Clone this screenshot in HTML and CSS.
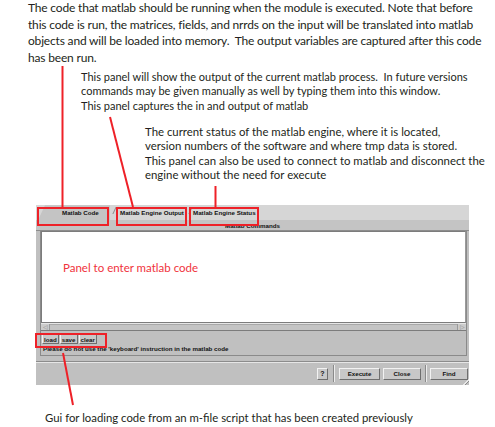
FILE: index.html
```html
<!DOCTYPE html>
<html>
<head>
<meta charset="utf-8">
<link rel="stylesheet" href="styles.css">
</head>
<body>
<div class="page">
  <p class="note note1">The code that matlab should be running when the module is executed. Note that before<br>this code is run, the matrices, fields, and nrrds on the input will be translated into matlab<br>objects and will be loaded into memory.&nbsp; The output variables are captured after this code<br>has been run.</p>
  <p class="note note2">This panel will show the output of the current matlab process.&nbsp; In future versions<br>commands may be given manually as well by typing them into this window.<br>This panel captures the in and output of matlab</p>
  <p class="note note3">The current status of the matlab engine, where it is located,<br>version numbers of the software and where tmp data is stored.<br>This panel can also be used to connect to matlab and disconnect the<br>engine without the need for execute</p>

  <div class="window">
    <div class="tabs">
      <div class="tab tab-code active">Matlab Code</div>
      <div class="tab tab-output">Matlab Engine Output</div>
      <div class="tab tab-status">Matlab Engine Status</div>
    </div>
    <div class="panel">
      <div class="cmdbar">Matlab Commands</div>
      <div class="editor"><span class="hint">Panel to enter matlab code</span></div>
      <div class="hscroll">
        <span class="arrow">&#9665;</span>
        <span class="track"></span>
        <span class="arrow">&#9655;</span>
      </div>
      <div class="tools">
        <button class="btn small">load</button>
        <button class="btn small">save</button>
        <button class="btn small">clear</button>
      </div>
      <div class="warn">Please do not use the 'keyboard' instruction in the matlab code</div>
    </div>
    <div class="footer">
      <button class="btn help">?</button>
      <span class="sep"></span>
      <button class="btn wide exec">Execute</button>
      <button class="btn wide close">Close</button>
      <span class="sep"></span>
      <button class="btn wide find">Find</button>
      <span class="grip"></span>
    </div>
  </div>

  <p class="note note4">Gui for loading code from an m-file script that has been created previously</p>

  <div class="mark box1"></div>
  <div class="mark box2"></div>
  <div class="mark box3"></div>
  <div class="mark box4"></div>
  <svg class="lines" width="495" height="427" viewBox="0 0 495 427">
    <line x1="62.5" y1="66" x2="62.5" y2="207"/>
    <line x1="110" y1="117" x2="133" y2="207"/>
    <line x1="215.5" y1="186" x2="215.5" y2="207"/>
    <line x1="63" y1="353" x2="73" y2="405"/>
  </svg>
</div>
</body>
</html>
```

FILE: styles.css
```css
* { box-sizing: border-box; }
html, body { margin: 0; padding: 0; background: #fff; }
.page {
  position: relative;
  width: 495px;
  height: 427px;
  overflow: hidden;
}
.note {
  margin: 0;
  font-family: Lato, "Open Sans", sans-serif;
  color: #231f20;
  white-space: nowrap;
}
.note1 {
  padding-left: 28px;
  font-size: 12px;
  letter-spacing: -0.18px;
  line-height: 16.5px;
}
.note2 {
  margin-top: 3.5px;
  padding-left: 81px;
  font-size: 11px;
  line-height: 14.5px;
}
.note3 {
  margin-top: 12px;
  padding-left: 145px;
  font-size: 11.4px;
  line-height: 14.3px;
}
.note4 {
  margin-top: 26px;
  padding-left: 45px;
  font-size: 11.35px;
  line-height: 14px;
}

/* ---------- window ---------- */
.window {
  margin: 23px 0 0 36px;
  width: 433px;
  height: 180px;
  background: #c0c0c0;
  display: flex;
  flex-direction: column;
  font-family: "Liberation Sans", Arial, sans-serif;
  font-weight: bold;
  font-size: 6.2px;
  color: #111;
}
.tabs {
  height: 15px;
  background: #d6d6d6;
  display: flex;
  align-items: stretch;
  padding-left: 2px;
}
.tab {
  position: relative;
  display: flex;
  align-items: center;
  white-space: nowrap;
}
.tab::before {
  content: "";
  position: absolute;
  left: 2px;
  top: 2px;
  width: 1px;
  height: 7px;
  background: #8a8a8a;
  transform: skewX(-25deg);
}
.tab-code {
  width: 72px;
  padding-left: 24px;
  background: #c4c4c4;
  clip-path: polygon(7px 0, 100% 0, 100% 100%, 0 100%);
}
.tab-code::before { display: none; }
.tab-output {
  margin-left: 2px;
  width: 76px;
  padding-left: 8px;
}
.tab-status {
  width: 72px;
  padding-left: 5px;
}

.panel {
  height: 136px;
  margin: 0 2px 0 4px;
  border-left: 1px solid #8a8a8a;
  border-right: 1px solid #8a8a8a;
  border-bottom: 1px solid #8a8a8a;
  display: flex;
  flex-direction: column;
}
.cmdbar {
  height: 11px;
  margin: 0 -3px 0 -5px;
  background: #c4c4c4;
  border-bottom: 1px solid #8c8c8c;
  display: flex;
  align-items: center;
  justify-content: center;
}
.editor {
  height: 92px;
  background: #fff;
  border: 1px solid #7c7c7c;
  border-right-color: #9a9a9a;
  padding: 29px 0 0 21px;
}
.hint {
  font-family: Lato, "Open Sans", sans-serif;
  font-weight: normal;
  font-size: 11.5px;
  color: #f0323c;
}
.hscroll {
  height: 8px;
  display: flex;
  border-top: 1px solid #e6e6e6;
  border-bottom: 1px solid #7c7c7c;
  background: #c4c4c4;
}
.hscroll .arrow {
  width: 9px;
  font-size: 6px;
  line-height: 6px;
  color: #8a8a8a;
  font-weight: normal;
  display: flex;
  align-items: center;
  justify-content: center;
  background: #cccccc;
  border-right: 1px solid #9a9a9a;
}
.hscroll .arrow:last-child {
  border-right: none;
  border-left: 1px solid #9a9a9a;
}
.hscroll .track {
  flex: 1;
  border-top: 1px solid #a8a8a8;
}
.tools {
  display: flex;
  gap: 1px;
  margin-top: 3px;
  padding-left: 1px;
}
.btn {
  font-family: "Liberation Sans", Arial, sans-serif;
  font-weight: bold;
  font-size: 6.2px;
  color: #111;
  background: #c8c8c8;
  border: 1px solid;
  border-color: #f2f2f2 #6e6e6e #6e6e6e #f2f2f2;
  padding: 0;
  margin: 0;
  display: flex;
  align-items: center;
  justify-content: center;
}
.btn.small { height: 10px; padding: 0 1px; }
.warn {
  margin-top: 1px;
  padding-left: 2px;
  font-size: 6.2px;
  line-height: 8px;
  white-space: nowrap;
}
.footer {
  flex: 1;
  margin-top: 5px;
  border-top: 1px solid #8c8c8c;
  box-shadow: inset 0 1px 0 #e6e6e6;
  display: flex;
  align-items: center;
  justify-content: flex-end;
  padding-right: 1px;
  position: relative;
}
.help { width: 11px; height: 12px; font-size: 7px; margin-right: 5px; }
.sep {
  width: 2px;
  height: 17px;
  border-left: 1px solid #8a8a8a;
  border-right: 1px solid #ececec;
}
.wide { height: 12px; }
.exec { width: 41px; margin-left: 4px; }
.close { width: 38px; margin-left: 3px; margin-right: 4px; }
.find { width: 38px; margin-left: 3px; }
.grip {
  position: absolute;
  right: 0;
  bottom: 0;
  width: 6px;
  height: 6px;
  background: linear-gradient(135deg, transparent 50%, #e8e8e8 50%, #e8e8e8 60%, #8a8a8a 60%, #8a8a8a 70%, transparent 70%);
}

/* ---------- annotations ---------- */
.mark {
  position: absolute;
  border: 2px solid #ee2128;
}
.box1 { left: 37px; top: 207px; width: 72px; height: 19px; }
.box2 { left: 116px; top: 207px; width: 71px; height: 19px; }
.box3 { left: 189px; top: 207px; width: 70px; height: 19px; }
.box4 { left: 35px; top: 333px; width: 72px; height: 15px; }
.lines {
  position: absolute;
  left: 0;
  top: 0;
  pointer-events: none;
}
.lines line {
  stroke: #ee2128;
  stroke-width: 2;
}
```
